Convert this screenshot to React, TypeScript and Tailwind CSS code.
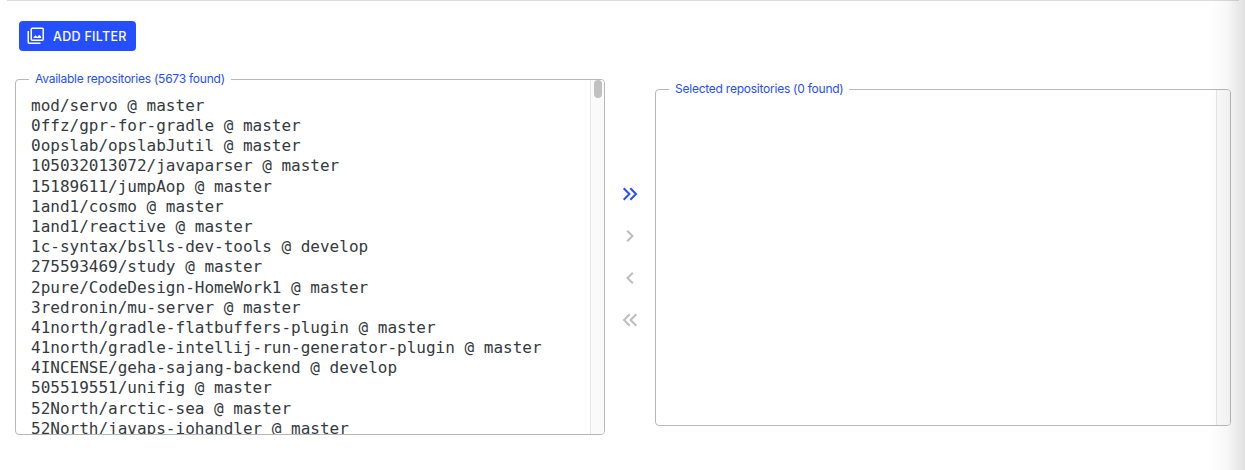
import type { ReactNode } from 'react';

const available = [
  'mod/servo @ master',
  '0ffz/gpr-for-gradle @ master',
  '0opslab/opslabJutil @ master',
  '105032013072/javaparser @ master',
  '15189611/jumpAop @ master',
  '1and1/cosmo @ master',
  '1and1/reactive @ master',
  '1c-syntax/bslls-dev-tools @ develop',
  '275593469/study @ master',
  '2pure/CodeDesign-HomeWork1 @ master',
  '3redronin/mu-server @ master',
  '41north/gradle-flatbuffers-plugin @ master',
  '41north/gradle-intellij-run-generator-plugin @ master',
  '4INCENSE/geha-sajang-backend @ develop',
  '505519551/unifig @ master',
  '52North/arctic-sea @ master',
  '52North/javaps-iohandler @ master',
];

function GalleryIcon() {
  return (
    <svg viewBox="0 0 20 20" className="size-5 shrink-0" fill="none" stroke="currentColor" strokeWidth="1.5">
      <rect x="5.25" y="2.25" width="12" height="12" rx="1" />
      <path d="M2.25 5v11.25a1 1 0 0 0 1 1H14.5" />
      <path d="M7.5 12v-.7l2-2 1.8 1.6 2-2.1 1.8 2V12z" fill="currentColor" stroke="none" />
    </svg>
  );
}

function Arrow({ d, label, active = false }: { d: string; label: string; active?: boolean }) {
  return (
    <button
      aria-label={label}
      disabled={!active}
      className={`flex h-[42px] w-[50px] items-center justify-center ${active ? 'text-[#254eff]' : 'text-[#bdbdbd]'}`}
    >
      <svg viewBox="0 0 24 24" className="size-6" fill="none" stroke="currentColor" strokeWidth="2">
        <path d={d} />
      </svg>
    </button>
  );
}

function ListBox({ title, className, thumb = false, children }: { title: string; className: string; thumb?: boolean; children?: ReactNode }) {
  return (
    <section className={`relative flex shrink-0 rounded border border-[#b8b8b8] ${className}`}>
      <h2 className="absolute -top-[9px] left-[13px] bg-white px-1.5 text-[12px] leading-4 tracking-[-0.24px] whitespace-nowrap text-[#254eff]">{title}</h2>
      <div className="min-w-0 flex-1 overflow-hidden pt-[15.82px] pl-[15px]">{children}</div>
      <div className="flex w-3.5 shrink-0 justify-center rounded-r-[3px] border-l border-[#e6e6e6] bg-[#fafafa]">
        {thumb && <div className="h-[18px] w-2 rounded-full bg-[#c1c1c1]" />}
      </div>
    </section>
  );
}

export default function App() {
  return (
    <div className="relative h-[470px] w-[1245px] overflow-hidden bg-white font-['Inter',sans-serif]">
      <div className="mr-1.5 ml-[7px] h-px bg-[#dcdcdc]" />
      <div className="pt-5 pl-[19px]">
        <button className="flex h-[30px] w-[117px] items-center gap-[7px] rounded bg-[#254eff] pl-[7px] text-[12.5px] font-medium tracking-[0.3px] whitespace-nowrap text-white">
          <GalleryIcon />
          <span className="pt-0.5">ADD FILTER</span>
        </button>
      </div>
      <main className="flex items-center pt-7 pl-[15px]">
        <ListBox title="Available repositories (5673 found)" className="h-[356px] w-[590px]" thumb>
          <ul className="font-['DejaVu_Sans_Mono',monospace] text-[16px] leading-[20.18px] whitespace-pre text-[#343a40]">
            {available.map((name) => (
              <li key={name}>{name}</li>
            ))}
          </ul>
        </ListBox>
        <div className="flex w-[50px] shrink-0 flex-col">
          <Arrow active label="Select all" d="M5.7 6.3l5.7 5.7-5.7 5.7M12.3 6.3l5.7 5.7-5.7 5.7" />
          <Arrow label="Select" d="M9.2 6.7l5.3 5.3-5.3 5.3" />
          <Arrow label="Deselect" d="M14.8 6.7L9.5 12l5.3 5.3" />
          <Arrow label="Deselect all" d="M18.3 6.3L12.6 12l5.7 5.7M11.7 6.3L6 12l5.7 5.7" />
        </div>
        <ListBox title="Selected repositories (0 found)" className="h-[337px] w-[576px]" />
      </main>
      <div className="pointer-events-none absolute inset-y-0 right-0 w-9 bg-linear-to-r from-black/0 via-black/3 to-black/12" />
    </div>
  );
}
